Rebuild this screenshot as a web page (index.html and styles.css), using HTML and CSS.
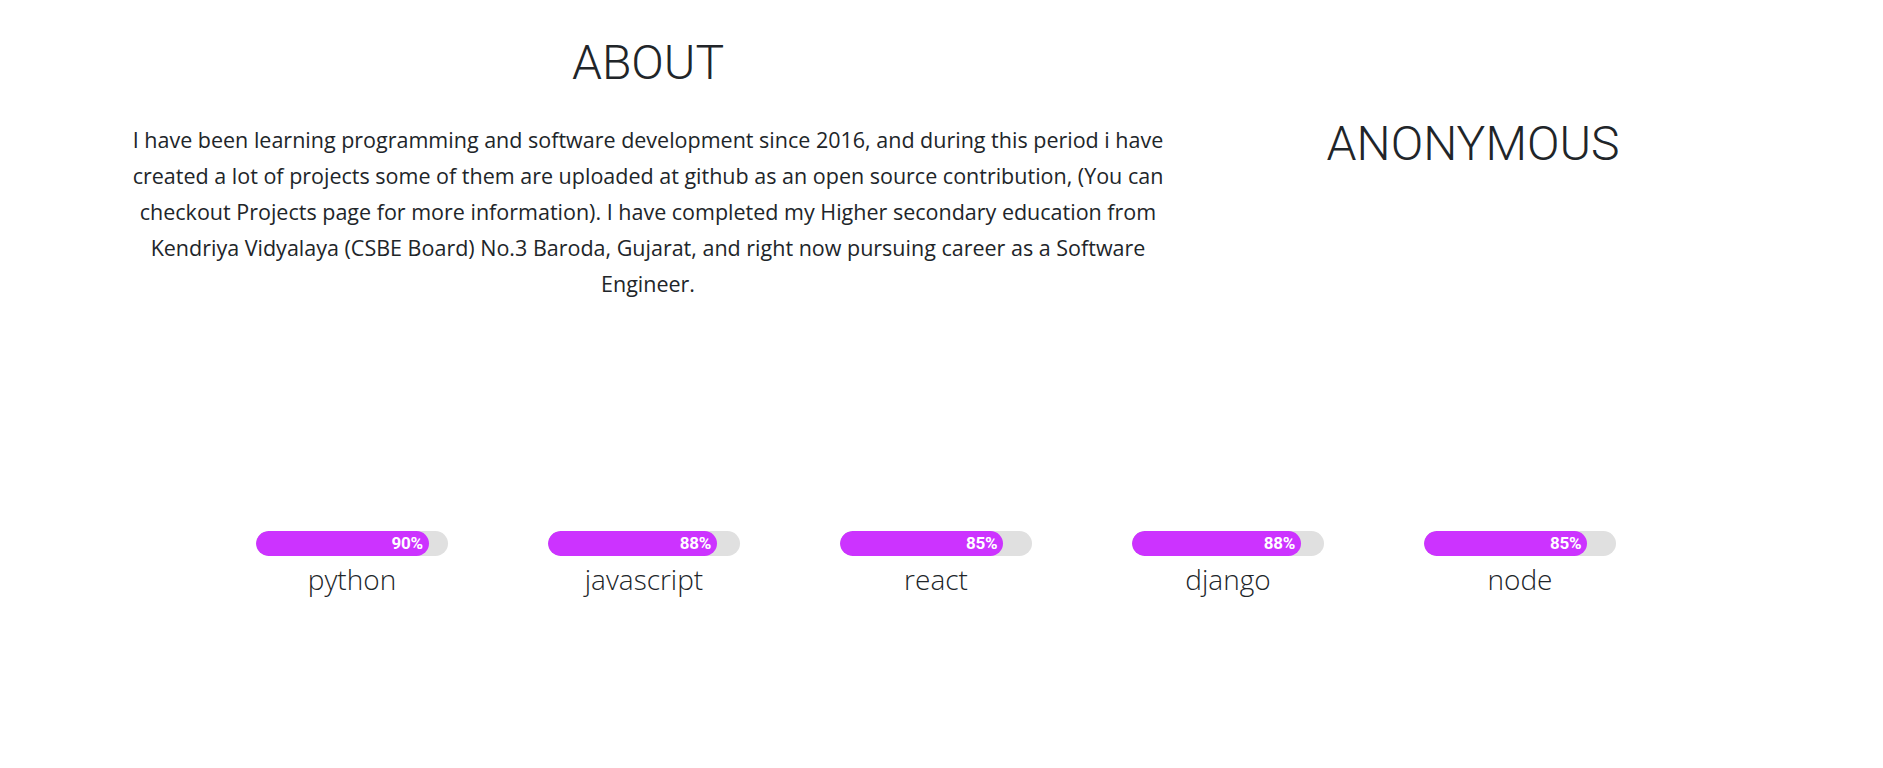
FILE: index.html
```html
<!DOCTYPE html>
<html lang="en">
<head>
<meta charset="utf-8">
<title>About</title>
<link rel="stylesheet" href="styles.css">
</head>
<body>
<section class="about">
  <div class="about-main">
    <h1 class="title">ABOUT</h1>
    <p class="bio">I have been learning programming and software development since 2016, and during this period i have created a lot of projects some of them are uploaded at github as an open source contribution, (You can checkout Projects page for more information). I have completed my Higher secondary education from Kendriya Vidyalaya (CSBE Board) No.3 Baroda, Gujarat, and right now pursuing career as a Software Engineer.</p>
  </div>
  <div class="about-side">
    <h1 class="title name">ANONYMOUS</h1>
  </div>
</section>
<section class="skills">
  <div class="skill">
    <div class="track"><div class="fill" style="width:90%"><span>90%</span></div></div>
    <div class="label">python</div>
  </div>
  <div class="skill">
    <div class="track"><div class="fill" style="width:88%"><span>88%</span></div></div>
    <div class="label">javascript</div>
  </div>
  <div class="skill">
    <div class="track"><div class="fill" style="width:85%"><span>85%</span></div></div>
    <div class="label">react</div>
  </div>
  <div class="skill">
    <div class="track"><div class="fill" style="width:88%"><span>88%</span></div></div>
    <div class="label">django</div>
  </div>
  <div class="skill">
    <div class="track"><div class="fill" style="width:85%"><span>85%</span></div></div>
    <div class="label">node</div>
  </div>
</section>
</body>
</html>
```

FILE: styles.css
```css
* { box-sizing: border-box; }

body {
  margin: 0;
  background: #fff;
  color: #212529;
  font-family: Roboto, "Liberation Sans", sans-serif;
  font-weight: 300;
}

.about {
  display: flex;
  padding-left: 98px;
  padding-top: 34px;
}

.about-main {
  width: 1100px;
  padding: 0 25px;
  text-align: center;
}

.about-side {
  width: 550px;
  text-align: center;
}

.title {
  margin: 0;
  font-size: 48px;
  line-height: 57.6px;
  font-weight: 300;
}

.name {
  margin-top: 81px;
}

.bio {
  margin: 30px 0 0;
  font-family: "Open Sans", Roboto, sans-serif;
  font-size: 21.5px;
  line-height: 36px;
  font-weight: 400;
}

.skills {
  display: flex;
  padding-left: 206px;
  margin-top: 229px;
}

.skill {
  width: 292px;
  display: flex;
  flex-direction: column;
  align-items: center;
}

.track {
  width: 192px;
  height: 25px;
  border-radius: 13px;
  background: #e0e0e0;
  overflow: hidden;
}

.fill {
  height: 100%;
  background: #cc33ff;
  border-radius: 13px;
  display: flex;
  align-items: center;
  justify-content: flex-end;
  padding-right: 6px;
}

.fill span {
  color: #fff;
  font-size: 17px;
  font-weight: 700;
  letter-spacing: -0.3px;
}

.label {
  margin-top: 5px;
  font-family: "Open Sans", Roboto, sans-serif;
  font-size: 28px;
  line-height: 36px;
  font-weight: 300;
}
```
